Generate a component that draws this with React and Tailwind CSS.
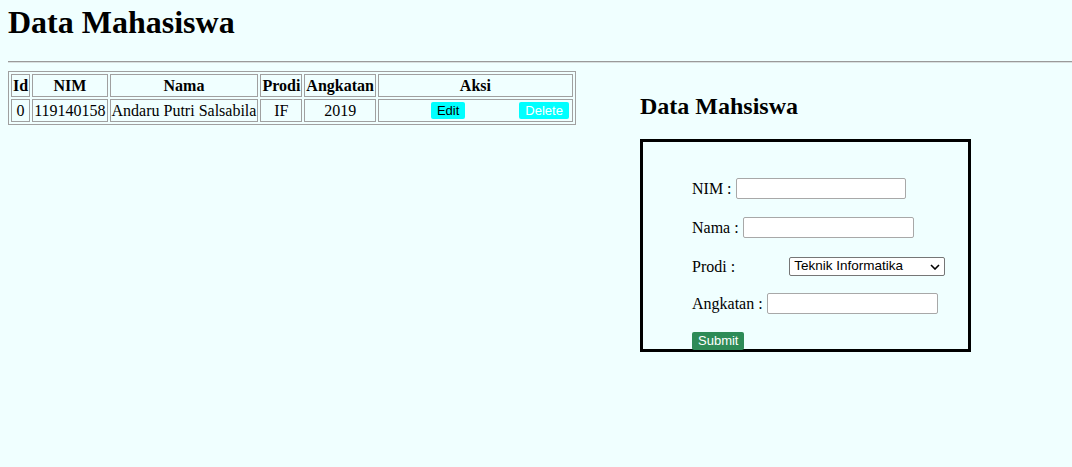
import React from 'react';

const mahasiswa = [
  { id: 0, nim: '119140158', nama: 'Andaru Putri Salsabila', prodi: 'IF', angkatan: 2019 },
];

function Field({ label, className, children }) {
  return (
    <div className={`flex items-center h-[21px] ${className}`}>
      <span className="text-[16px] leading-[21px]">{label}</span>
      {children}
    </div>
  );
}

export default function App() {
  const cell = 'border border-[#a0a0a0] px-px py-px whitespace-nowrap';
  return (
    <div className="min-h-[467px] bg-[#f0ffff] text-black font-['Liberation_Serif',serif] overflow-hidden">
      <h1 className="pl-[8px] pt-[4px] text-[32px] leading-[37px] font-bold">Data Mahasiswa</h1>
      <hr className="ml-[8px] mt-[20px] border-0 border-t border-t-[#9a9a9a] border-b border-b-[#d8e0e0]" />

      <div className="flex pl-[8px] pt-[8px]">
        {/* tabel data */}
        <div className="w-[632px] shrink-0">
          <table className="border border-[#a0a0a0] border-separate border-spacing-[2px] text-[16px] leading-[19px]">
            <thead>
              <tr>
                <th className={cell}>Id</th>
                <th className={cell}>NIM</th>
                <th className={cell}>Nama</th>
                <th className={cell}>Prodi</th>
                <th className={cell}>Angkatan</th>
                <th className={`${cell} w-[195px]`}>Aksi</th>
              </tr>
            </thead>
            <tbody>
              {mahasiswa.map((m) => (
                <tr key={m.id}>
                  <td className={`${cell} text-center`}>{m.id}</td>
                  <td className={`${cell} text-center`}>{m.nim}</td>
                  <td className={`${cell} text-center`}>{m.nama}</td>
                  <td className={`${cell} text-center`}>{m.prodi}</td>
                  <td className={`${cell} text-center`}>{m.angkatan}</td>
                  <td className={cell}>
                    <div className="flex items-center h-[19px]">
                      <button className="ml-[51px] h-[17px] px-[6px] bg-[#00ffff] rounded-[2px] font-['Liberation_Sans',sans-serif] text-[13px] leading-[17px] text-black">
                        Edit
                      </button>
                      <button className="ml-auto mr-[2px] h-[17px] px-[6px] bg-[#00ffff] rounded-[2px] font-['Liberation_Sans',sans-serif] text-[13px] leading-[17px] text-white">
                        Delete
                      </button>
                    </div>
                  </td>
                </tr>
              ))}
            </tbody>
          </table>
        </div>

        {/* form input */}
        <div>
          <h2 className="mt-[21px] text-[24px] leading-[28px] font-bold">Data Mahsiswa</h2>
          <div className="mt-[19px] w-[331px] h-[213px] border-[3px] border-black pl-[49px] pt-[36px]">
            <Field label="NIM :">
              <input className="ml-[4px] w-[170px] h-[21px] bg-white border border-[#a8a8a8] rounded-[2px]" />
            </Field>
            <Field label="Nama :" className="mt-[18px]">
              <input className="ml-[4px] w-[171px] h-[21px] bg-white border border-[#a8a8a8] rounded-[2px]" />
            </Field>
            <Field label="Prodi :" className="mt-[18px]">
              <div className="ml-[54px] w-[156px] h-[19px] bg-white border border-[#767676] rounded-[2px] flex items-center justify-between pl-[4px] pr-[4px] font-['Liberation_Sans',sans-serif] text-[13.5px]">
                <span>Teknik Informatika</span>
                <svg width="10" height="6" viewBox="0 0 10 6" fill="none" stroke="black" strokeWidth="1.6">
                  <path d="M1 1l4 4 4-4" />
                </svg>
              </div>
            </Field>
            <Field label="Angkatan :" className="mt-[16px]">
              <input className="ml-[4px] w-[171px] h-[21px] bg-white border border-[#a8a8a8] rounded-[2px]" />
            </Field>
            <button className="mt-[18px] h-[18px] px-[6px] bg-[#2e8b57] rounded-[2px] text-white font-['Liberation_Sans',sans-serif] text-[13px] leading-[18px]">
              Submit
            </button>
          </div>
        </div>
      </div>
    </div>
  );
}
